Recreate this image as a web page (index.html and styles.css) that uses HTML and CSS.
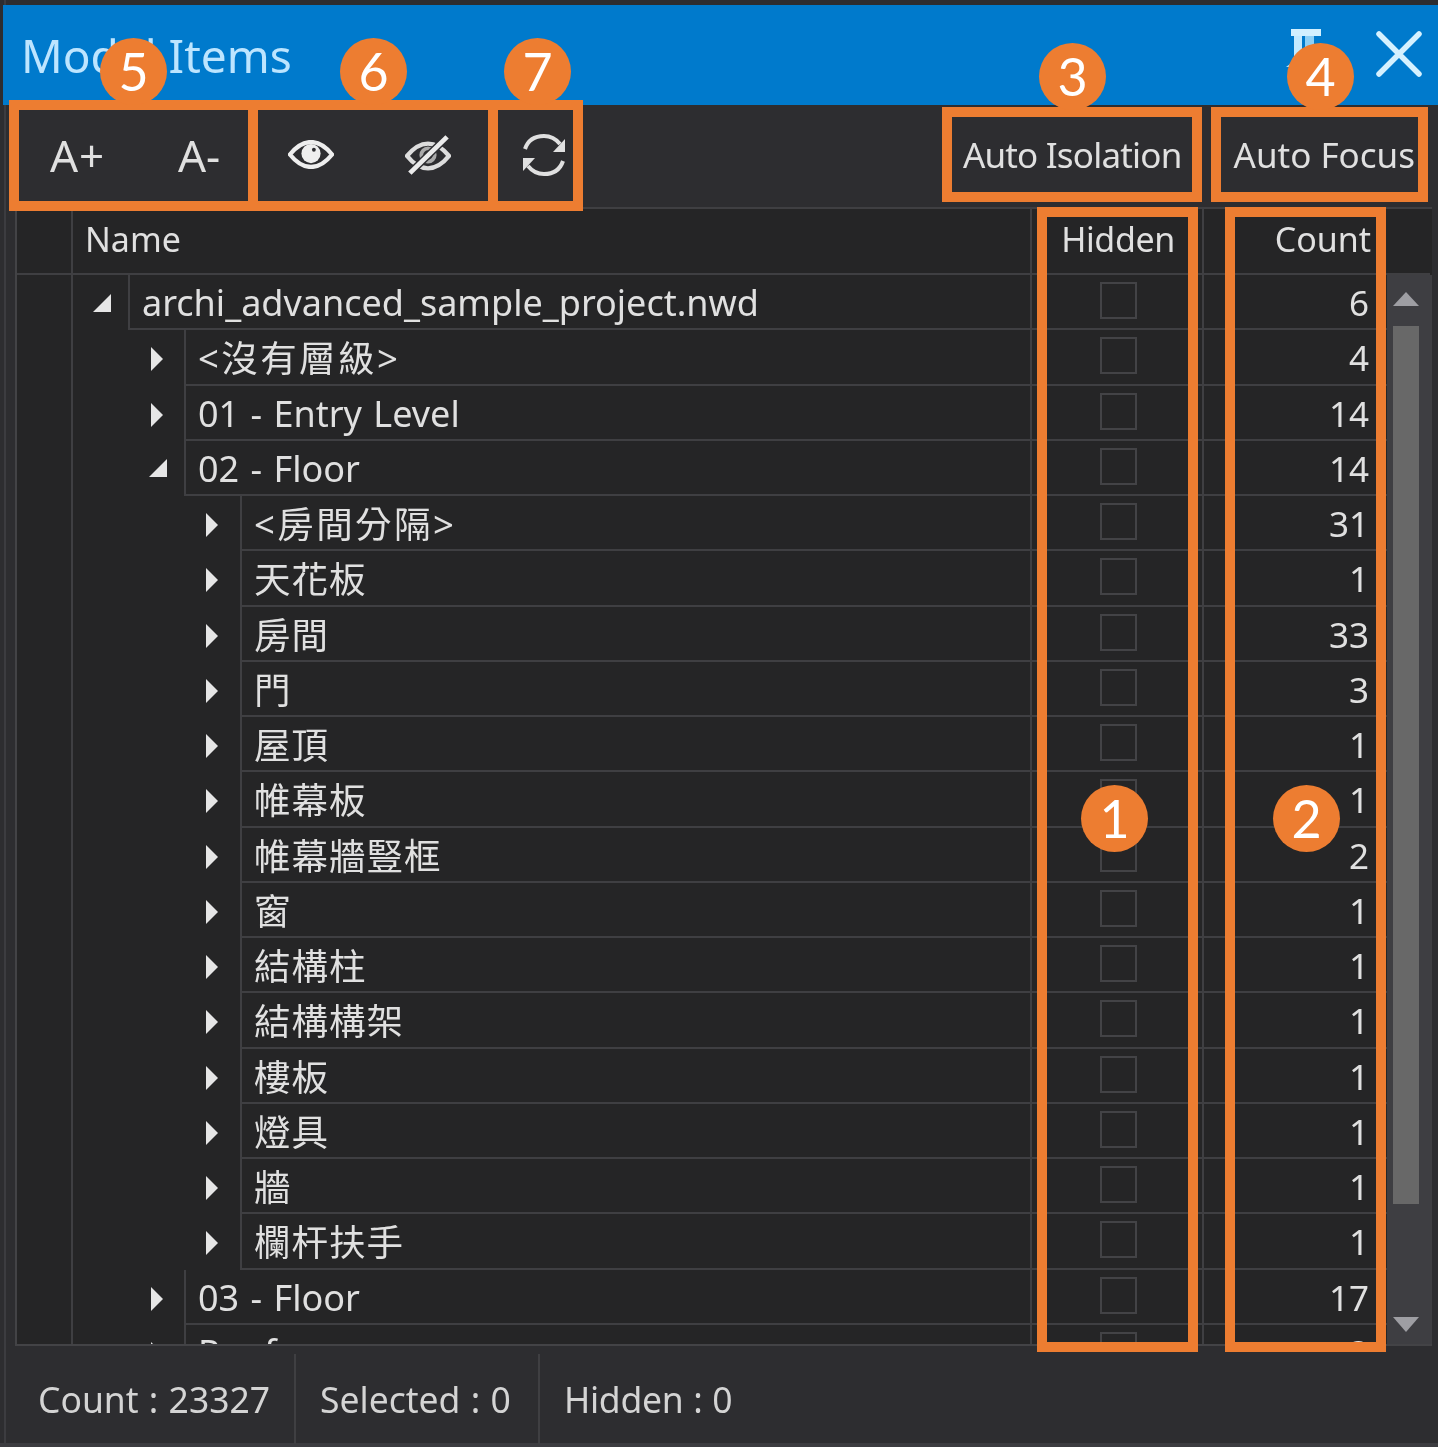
FILE: index.html
```html
<!DOCTYPE html>
<html lang="zh-Hant">
<head>
<meta charset="utf-8">
<title>Model Items</title>
<link rel="stylesheet" href="styles.css">
</head>
<body>
<div class="stage">
  <div class="window">
    <header class="titlebar">
      <span class="title">Model Items</span>
      <span class="title-actions">
        <svg class="pin" viewBox="0 0 38 60"><path d="M5 2h30v7H5z" fill="#d2f0ff"/><path d="M8 9h8v28l-8 3z" fill="#c4eaff"/><path d="M19 9h9v28h-9z" fill="#8fd0f5"/><path d="M0 40l8-6h22l8 6z" fill="#b4e2fb"/></svg>
        <svg class="close" viewBox="0 0 46 46"><path d="M3 3l40 40M43 3L3 43" stroke="#d5f1ff" stroke-width="5.5" stroke-linecap="round" fill="none"/></svg>
      </span>
    </header>
    <div class="toolbar">
      <div class="tool-group">
        <span class="tool-a plus">A+</span>
        <span class="tool-a minus">A-</span>
        <svg class="eye" viewBox="0 0 48 30"><path d="M2 15C10 5 17 2 24 2s14 3 22 13c-8 10-15 13-22 13S10 25 2 15z" fill="none" stroke="#eee" stroke-width="4.5"/><circle cx="24" cy="14" r="10" fill="#eee"/><circle cx="27" cy="10" r="2" fill="#2d2d30"/></svg>
        <svg class="eye-off" viewBox="0 0 48 44"><path d="M2 23C10 13 17 10 24 10s14 3 22 13c-8 10-15 13-22 13S10 33 2 23z" fill="none" stroke="#ddd" stroke-width="4.5"/><circle cx="24" cy="22" r="7" fill="none" stroke="#aaa" stroke-width="4"/><path d="M5 41L44 3" stroke="#2d2d30" stroke-width="8"/><path d="M5 41L44 3" stroke="#ececec" stroke-width="5"/></svg>
        <svg class="sync" viewBox="0 0 44 44"><path d="M3 16C6 7 13 3 22 3c7 0 12 3 16 8" fill="none" stroke="#e0e0e0" stroke-width="4"/><path d="M43 6v13H31z" fill="#e0e0e0"/><path d="M41 28c-3 9-10 13-19 13-7 0-12-3-16-8" fill="none" stroke="#e0e0e0" stroke-width="4"/><path d="M1 38V25h12z" fill="#e0e0e0"/></svg>
      </div>
      <div class="auto-group">
        <span class="auto auto-iso">Auto Isolation</span>
        <span class="auto auto-focus">Auto Focus</span>
      </div>
    </div>
    <section class="tree">
      <div class="tree-head">
        <span class="lead"></span>
        <span class="head-name">Name</span>
        <span class="head-hidden">Hidden</span>
        <span class="head-count">Count</span>
      </div>
      <div class="tree-body">
        <div class="rows">
          <div class="row"><span class="lead"></span><span class="indent l0"><i class="arrow open"></i></span><span class="name">archi_advanced_sample_project.nwd</span><span class="hid"><b class="check"></b></span><span class="cnt">6</span></div>
          <div class="row"><span class="lead"></span><span class="indent l1"><i class="arrow"></i></span><span class="name cjk wide">&lt;沒有層級&gt;</span><span class="hid"><b class="check"></b></span><span class="cnt">4</span></div>
          <div class="row"><span class="lead"></span><span class="indent l1"><i class="arrow"></i></span><span class="name">01 - Entry Level</span><span class="hid"><b class="check"></b></span><span class="cnt">14</span></div>
          <div class="row"><span class="lead"></span><span class="indent l1"><i class="arrow open"></i></span><span class="name">02 - Floor</span><span class="hid"><b class="check"></b></span><span class="cnt">14</span></div>
          <div class="row"><span class="lead"></span><span class="indent l2"><i class="arrow"></i></span><span class="name cjk wide">&lt;房間分隔&gt;</span><span class="hid"><b class="check"></b></span><span class="cnt">31</span></div>
          <div class="row"><span class="lead"></span><span class="indent l2"><i class="arrow"></i></span><span class="name cjk">天花板</span><span class="hid"><b class="check"></b></span><span class="cnt">1</span></div>
          <div class="row"><span class="lead"></span><span class="indent l2"><i class="arrow"></i></span><span class="name cjk">房間</span><span class="hid"><b class="check"></b></span><span class="cnt">33</span></div>
          <div class="row"><span class="lead"></span><span class="indent l2"><i class="arrow"></i></span><span class="name cjk">門</span><span class="hid"><b class="check"></b></span><span class="cnt">3</span></div>
          <div class="row"><span class="lead"></span><span class="indent l2"><i class="arrow"></i></span><span class="name cjk">屋頂</span><span class="hid"><b class="check"></b></span><span class="cnt">1</span></div>
          <div class="row"><span class="lead"></span><span class="indent l2"><i class="arrow"></i></span><span class="name cjk">帷幕板</span><span class="hid"><b class="check"></b></span><span class="cnt">1</span></div>
          <div class="row"><span class="lead"></span><span class="indent l2"><i class="arrow"></i></span><span class="name cjk">帷幕牆豎框</span><span class="hid"><b class="check"></b></span><span class="cnt">2</span></div>
          <div class="row"><span class="lead"></span><span class="indent l2"><i class="arrow"></i></span><span class="name cjk">窗</span><span class="hid"><b class="check"></b></span><span class="cnt">1</span></div>
          <div class="row"><span class="lead"></span><span class="indent l2"><i class="arrow"></i></span><span class="name cjk">結構柱</span><span class="hid"><b class="check"></b></span><span class="cnt">1</span></div>
          <div class="row"><span class="lead"></span><span class="indent l2"><i class="arrow"></i></span><span class="name cjk">結構構架</span><span class="hid"><b class="check"></b></span><span class="cnt">1</span></div>
          <div class="row"><span class="lead"></span><span class="indent l2"><i class="arrow"></i></span><span class="name cjk">樓板</span><span class="hid"><b class="check"></b></span><span class="cnt">1</span></div>
          <div class="row"><span class="lead"></span><span class="indent l2"><i class="arrow"></i></span><span class="name cjk">燈具</span><span class="hid"><b class="check"></b></span><span class="cnt">1</span></div>
          <div class="row"><span class="lead"></span><span class="indent l2"><i class="arrow"></i></span><span class="name cjk">牆</span><span class="hid"><b class="check"></b></span><span class="cnt">1</span></div>
          <div class="row"><span class="lead"></span><span class="indent l2"><i class="arrow"></i></span><span class="name cjk">欄杆扶手</span><span class="hid"><b class="check"></b></span><span class="cnt">1</span></div>
          <div class="row"><span class="lead"></span><span class="indent l1"><i class="arrow"></i></span><span class="name">03 - Floor</span><span class="hid"><b class="check"></b></span><span class="cnt">17</span></div>
          <div class="row"><span class="lead"></span><span class="indent l1"><i class="arrow"></i></span><span class="name">Roof</span><span class="hid"><b class="check"></b></span><span class="cnt">3</span></div>
        </div>
        <div class="scrollbar">
          <i class="scroll-up"></i>
          <div class="thumb"></div>
          <i class="scroll-down"></i>
        </div>
      </div>
    </section>
    <footer class="status">
      <span class="stat stat-count">Count : 23327</span>
      <span class="stat stat-selected">Selected : 0</span>
      <span class="stat stat-hidden">Hidden : 0</span>
    </footer>
  </div>

  <div class="marks">
    <span class="frame f5"></span>
    <span class="frame f6"></span>
    <span class="frame f7"></span>
    <span class="frame f3"></span>
    <span class="frame f4"></span>
    <span class="frame f1"></span>
    <span class="frame f2"></span>
    <span class="badge b1">1</span>
    <span class="badge b2">2</span>
    <span class="badge b3">3</span>
    <span class="badge b4">4</span>
    <span class="badge b5">5</span>
    <span class="badge b6">6</span>
    <span class="badge b7">7</span>
  </div>
</div>
</body>
</html>
```
FILE: styles.css
```css
* { box-sizing: border-box; }
html, body { margin: 0; padding: 0; background: #2d2d30; }
.stage { position: relative; width: 1438px; height: 1447px; overflow: hidden; }

.window {
  width: 1438px;
  height: 1447px;
  padding-top: 5px;
  display: flex;
  flex-direction: column;
  background: linear-gradient(90deg, #2d2d30 4px, #3c3c40 4px, #3c3c40 6px, #2d2d30 6px);
  color: #e0e0e0;
  font-family: "Noto Sans", "Noto Sans CJK TC", sans-serif;
  font-size: 35px;
  border-bottom: 4px solid #3c3c40;
  filter: blur(0.6px);
}

.titlebar {
  height: 100px;
  margin-left: 3px;
  padding-left: 18px;
  display: flex;
  align-items: flex-start;
  justify-content: space-between;
  background: #007acc;
  flex: none;
}
.title { font-size: 46px; font-weight: 400; line-height: 62px; margin-top: 19px; color: #bde5ff; white-space: nowrap; }
.title-actions { display: flex; align-items: flex-start; gap: 52px; padding: 26px 16px 0 0; }
.pin { width: 38px; height: 60px; margin-top: -4px; }
.close { width: 46px; height: 46px; }

.toolbar {
  height: 102px;
  flex: none;
  display: flex;
  justify-content: space-between;
  align-items: center;
  padding: 0 23px 0 50px;
}
.tool-group { display: flex; align-items: center; }
.tool-a { font-size: 44px; line-height: 50px; margin-top: -3px; }
.plus { width: 128px; letter-spacing: 1px; }
.minus { width: 110px; }
.eye { width: 46px; height: 29px; margin-right: 71px; margin-top: -4px; }
.eye-off { width: 46px; height: 42px; margin-right: 72px; margin-top: -2px; }
.sync { width: 44px; height: 44px; margin-top: -2px; margin-left: -1px; }
.auto-group { display: flex; align-items: center; gap: 52px; margin-top: -4px; }
.auto { white-space: nowrap; }
.auto-iso { letter-spacing: -0.8px; }

.tree {
  margin-left: 15px;
  width: 1417px;
  height: 1139px;
  flex: none;
  display: flex;
  flex-direction: column;
  background: #252526;
  border-top: 2px solid #3f3f42;
  border-left: 2px solid #434346;
  border-bottom: 2px solid #434346;
  overflow: hidden;
}
.tree-head {
  height: 66px;
  flex: none;
  display: flex;
  align-items: center;
  margin-right: 2px;
  font-size: 34px;
  border-bottom: 2px solid #3f3f42;
}
.lead { width: 56px; height: 100%; flex: none; border-right: 2px solid #3f3f42; }
.head-name { width: 959px; padding-left: 12px; height: 100%; line-height: 61px; border-right: 2px solid #3f3f42; }
.head-hidden { width: 172px; height: 100%; line-height: 61px; text-align: center; letter-spacing: -0.4px; padding-left: 2px; border-right: 2px solid #3f3f42; }
.head-count { width: 167px; height: 100%; line-height: 61px; text-align: right; }

.tree-body { flex: 1; display: flex; min-height: 0; }
.rows { width: 1370px; flex: none; overflow: hidden; }
.row { height: 55.25px; display: flex; }
.indent { flex: none; display: flex; justify-content: flex-end; align-items: center; }
.l0 { width: 55px; padding-right: 21px; }
.l1 { width: 111px; padding-right: 21px; }
.l2 { width: 167px; padding-right: 22px; }
.arrow { display: block; width: 0; height: 0; margin-top: 3px; border-left: 12px solid #e6e6e6; border-top: 12px solid transparent; border-bottom: 12px solid transparent; }
.arrow.open { margin-top: 0; border-top: 0; border-left: 18px solid transparent; border-bottom: 18px solid #e6e6e6; margin-right: -4px; }
.name {
  flex: 1;
  min-width: 0;
  padding-left: 12px;
  font-size: 36px;
  word-spacing: 2px;
  line-height: 56px;
  white-space: nowrap;
  border-left: 2px solid #3f3f42;
  border-bottom: 2px solid #3f3f42;
}
.cjk { font-size: 36.5px; letter-spacing: 1px; }
.wide { letter-spacing: 2.4px; }
.hid { width: 172px; flex: none; display: flex; align-items: center; justify-content: center; padding-left: 2px; border-left: 2px solid #3f3f42; border-bottom: 2px solid #3f3f42; }
.check { width: 37px; height: 37px; margin-top: -2px; border: 2px solid #434346; }
.cnt { width: 185px; flex: none; text-align: right; padding-right: 18px; line-height: 56px; border-left: 2px solid #3f3f42; border-bottom: 2px solid #3f3f42; }

.scrollbar {
  width: 45px;
  flex: none;
  display: flex;
  flex-direction: column;
  align-items: center;
  background: #3e3e42;
  padding: 17px 13px 0 6px;
}
.thumb { width: 26px; height: 878px; margin-top: 20px; background: #686868; flex: none; }
.scroll-up, .scroll-down { display: block; width: 0; height: 0; flex: none; border-left: 13px solid transparent; border-right: 13px solid transparent; }
.scroll-up { border-bottom: 14px solid #9e9ea3; }
.scroll-down { border-top: 15px solid #9e9ea3; margin-top: 113px; }

.status { flex: 1; display: flex; align-items: stretch; padding-top: 8px; font-size: 35.5px; word-spacing: 1px; color: #d4d4d4; }
.stat { padding: 0 24px; line-height: 90px; white-space: nowrap; border-right: 2px solid #3f3f42; }
.stat-count { width: 296px; padding-left: 38px; }
.stat-selected { width: 244px; }
.stat-hidden { border-right: 0; letter-spacing: -0.3px; }

/* annotation overlay */
.marks { position: absolute; inset: 0; pointer-events: none; }
.frame { position: absolute; border: 10px solid #ed7d31; }
.f5 { left: 9px; top: 100px; width: 249px; height: 111px; }
.f6 { left: 248px; top: 100px; width: 250px; height: 111px; }
.f7 { left: 488px; top: 100px; width: 95px; height: 111px; }
.f3 { left: 942px; top: 107px; width: 260px; height: 95px; }
.f4 { left: 1211px; top: 107px; width: 217px; height: 95px; }
.f1 { left: 1037px; top: 207px; width: 161px; height: 1145px; }
.f2 { left: 1225px; top: 207px; width: 161px; height: 1145px; }
.badge {
  position: absolute;
  width: 67px;
  height: 67px;
  border-radius: 50%;
  background: #ed7d31;
  color: #fff;
  font: 400 52px/67px Lato, sans-serif;
  text-align: center;
}
.b1 { left: 1081px; top: 785px; }
.b2 { left: 1273px; top: 785px; }
.b3 { left: 1039px; top: 43px; }
.b4 { left: 1287px; top: 43px; }
.b5 { left: 100px; top: 38px; }
.b6 { left: 340px; top: 38px; }
.b7 { left: 504px; top: 38px; }
```
